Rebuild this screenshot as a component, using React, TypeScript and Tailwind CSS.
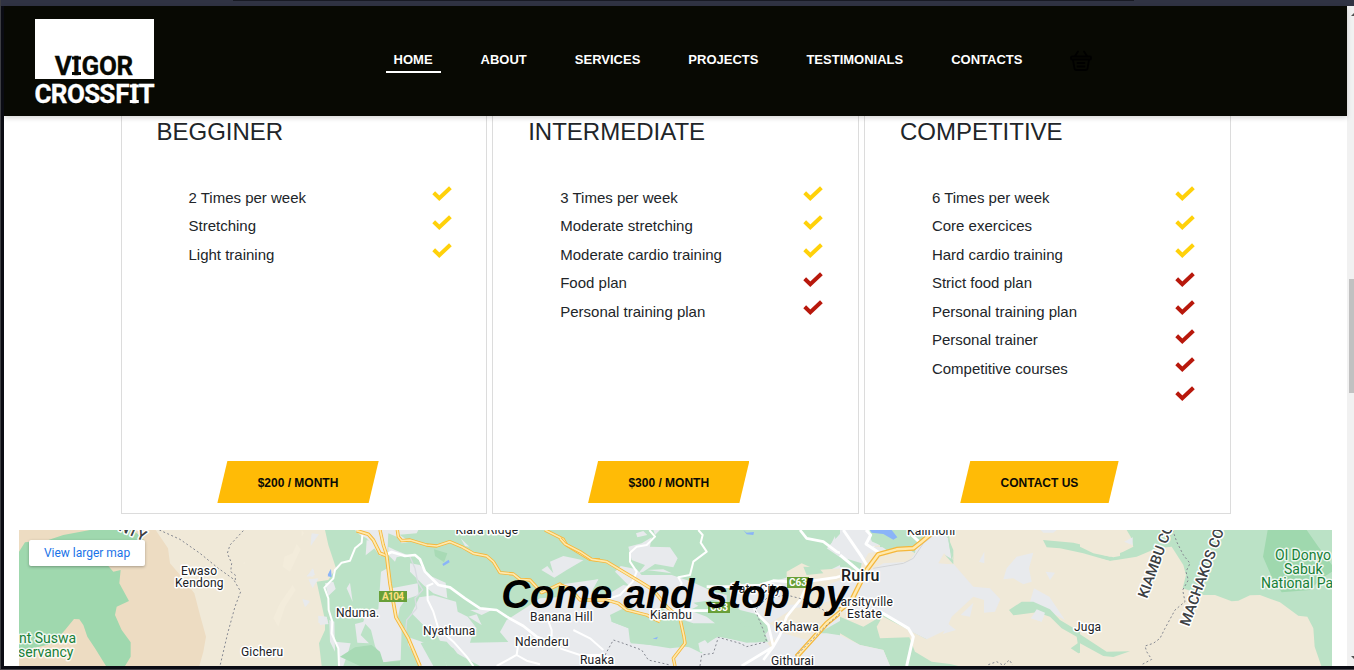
import React from "react";

const YELLOW = "#ffd10a";
const RED = "#b8180c";

const navItems = ["HOME", "ABOUT", "SERVICES", "PROJECTS", "TESTIMONIALS", "CONTACTS"];

const plans = [
  {
    name: "BEGGINER",
    items: ["2 Times per week", "Stretching", "Light training"],
    checks: [YELLOW, YELLOW, YELLOW],
    action: "$200 / MONTH",
    actionRow: "pr-3",
  },
  {
    name: "INTERMEDIATE",
    items: ["3 Times per week", "Moderate stretching", "Moderate cardio training", "Food plan", "Personal training plan"],
    checks: [YELLOW, YELLOW, YELLOW, RED, RED],
    action: "$300 / MONTH",
    actionRow: "pr-3.5",
  },
  {
    name: "COMPETITIVE",
    items: [
      "6 Times per week",
      "Core exercices",
      "Hard cardio training",
      "Strict food plan",
      "Personal training plan",
      "Personal trainer",
      "Competitive courses",
    ],
    checks: [YELLOW, YELLOW, YELLOW, RED, RED, RED, RED, RED],
    action: "CONTACT US",
    actionRow: "pr-4",
  },
];

function Logo() {
  return (
    <svg className="overflow-visible" width="122" height="88" viewBox="34 19 122 88" fontFamily="Roboto, sans-serif" fontWeight="700" fontSize="26">
      <rect x="35" y="19" width="119" height="60" fill="#fff" />
      <g fill="#080903" stroke="#080903" strokeWidth="0.3">
        <text x="54.7 72.6 81.4 98.9 116.4" y="75">VIGOR</text>
        <path stroke="none" d="M72 56.500h9v3h-9zM72 72h9v3h-9z" />
      </g>
      <g fill="#fff" stroke="#fff" strokeWidth="0.3">
        <text x="34.4 50.7 67 84.2 99.2 115.3 130.4 138.6" y="103">CROSSFIT</text>
        <path stroke="none" d="M129.800 84.500h9v3h-9zM129.800 100h9v3h-9z" />
      </g>
    </svg>
  );
}

function Basket() {
  return (
    <svg width="22" height="22" viewBox="0 0 22 22" fill="none" stroke="#000" strokeWidth="1.8" strokeLinecap="round" strokeLinejoin="round">
      <path d="M5 6 8 1.5M17 6l-3-4.500M2 6.500h18a1 1 0 0 1 1 1v1a1 1 0 0 1-1 1H2a1 1 0 0 1-1-1v-1a1 1 0 0 1 1-1zM3 10l1.500 8.500a2 2 0 0 0 2 1.500h9a2 2 0 0 0 2-1.500L19 10M7.500 13h7M7.500 16.500h7" />
    </svg>
  );
}

function Check({ color }: { color: string }) {
  return (
    <svg width="20" height="16" viewBox="0 0 20 16" fill="none" stroke={color} strokeWidth="4" strokeLinejoin="miter">
      <path d="M1.700 7.700 7.300 13.200 18.400 2.800" />
    </svg>
  );
}

const minor = { fill: "none", stroke: "#fff", strokeWidth: 6, strokeLinejoin: "round" as const };
const dashed = { fill: "none", stroke: "#858891", strokeWidth: 3, strokeDasharray: "6 7" };

function Highway({ d, w = 10 }: { d: string; w?: number }) {
  return (
    <g fill="none" strokeLinejoin="round">
      <path d={d} stroke="#f5b73b" strokeWidth={w} />
      <path d={d} stroke="#ffe9ad" strokeWidth={w * 0.5} />
    </g>
  );
}

function WestMap() {
  return (
    <g transform="translate(0 440) scale(0.33333)">
      <path fill="#f0e9d8" d="M57 270H975L985 315 1000 360 1008 385 985 420 950 425 975 540 975 570 957 610 965 678H57z" />
      <path fill="#eddcc2" d="M57 270H467L504 325 510 370 545 410 583 460 600 525 618 590 610 635 598 678H57z" />
      <path fill="#9fd8ae" d="M57 335 75 307 145 300 190 285 270 270H400L432 300 325 378 340 395 362 390 358 430 387 483 350 500 345 525 365 570 392 607V650L375 678H318L285 625 262 590 250 555 238 538 222 537 195 570 160 610 100 625 57 630z" />
      <path fill="#f3ecdb" d="M890 312 902 328 870 395 848 380 853 350 878 340zM878 435 887 450 855 500 835 560 820 535 840 490zM905 270 912 280 905 290zM730 370 734 365 734 372z" />
      <path fill="#e8eaed" d="M935 280 957 283 932 318zM942 388 940 410 920 408zM925 418 955 415 938 445zM907 478 930 485 915 502zM955 527 980 530 985 553 955 548z" />
      <path fill="#8ab4f8" d="M993 387 995 411 983 409z" />
      <path {...dashed} d="M478 270 540 298 600 340 655 385 700 417 722 455 705 500 683 580 660 678M730 272 690 315 682 340 695 370 692 395 706 405V425" />
    </g>
  );
}

function LimuruMap() {
  return (
    <g transform="translate(300 520) scale(0.33333)">
      <g fill="#e8eaed">
        <path d="M165 30H355L350 40 298 44 330 65 305 70 290 50 265 40 262 100 240 108 200 55 180 45z" />
        <path d="M200 60 236 75 197 106zM150 188 158 246 140 205zM75 190 100 185 107 207 85 228z" />
        <path d="M243 155 262 145 275 205 353 190 356 225 318 238 300 262 292 300 305 325 302 420 250 427 225 378 213 330 190 305 200 272 235 268z" />
        <path d="M335 280 358 232 400 226 468 245 473 275 503 290 530 325 515 350 510 368 625 366 600 336 620 300 680 262 720 235 835 228 900 210V438H600L540 438 470 400 440 365 420 362 400 325 370 315z" />
        <path d="M330 130 360 135 385 165 437 188 442 235 400 220 370 195 330 155zM265 80 285 90 322 105 290 112 285 125 265 105zM510 270 580 268 545 285zM505 290 530 283 545 315z" />
        <path d="M724 150 742 138 760 160 750 125 790 108 850 121 800 150 763 173zM770 195 895 178 870 215 820 222z" />
        <path d="M482 55 508 80 495 78z" />
        <path d="M165 312 200 303 182 345 207 370 172 368zM88 300 103 305 105 395 90 365zM55 288 80 292 85 312 60 315zM105 365 152 370 145 395 130 438H115V385zM322 350 420 385 440 438H365L325 375z" />
        <path d="M35 45 55 42 32 72zM38 145 45 165 20 170zM28 182 55 178 38 200zM8 238 28 242 18 258z" />
      </g>
      <path fill="#bbe2c6" d="M390 360 425 385 440 438H400L362 370zM430 370 460 385 480 412 440 400z" />
      <path fill="#a8dab5" d="M120 410 165 382 215 375 240 395 250 427 300 423V438H180zM402 88 442 100 432 127 405 108z" />
      <path fill="#8ab4f8" d="M427 132 446 119 449 127 430 138zM92 147 92 170 83 165z" />
      <path fill="none" stroke="#d9dce1" strokeWidth="4" d="M330 110 345 145 353 185 368 210 345 235 350 265 320 300 316 345" />
      <path {...minor} d="M187 45 185 68 165 85 150 122 125 128 105 150 100 175 73 203 85 235 86 270 97 305 95 340 115 385 117 438" />
      <path {...minor} strokeWidth={8} d="M255 105 275 96 315 108 345 105 360 118 375 155 400 180 415 195 450 202 495 235 540 265 590 270 620 290 670 318 710 350 765 372 800 395 840 405 900 420" />
      <path {...minor} d="M400 190 382 198 383 240 400 275 415 325 460 365 500 410 520 438M590 438 650 405 655 370M650 405 680 422 720 433M790 265 810 295 825 325 900 378M740 290 755 330 755 350" />
      <Highway w={11} d="M170 32 205 43 220 60 240 100 260 107 270 190 288 292 325 355 360 438" />
      <Highway w={10} d="M240 30 250 75 260 105M292 30 295 50 305 62 330 60 380 75 410 78 450 65 485 80 520 100 560 108 580 125 600 158 640 162 660 178 690 180 725 218 780 192 820 220 900 243M735 30 790 58 800 75 870 118 900 120" />
    </g>
  );
}

function KiambuMap() {
  return (
    <g transform="translate(560 520) scale(0.33333)">
      <g fill="#e8eaed">
        <path d="M205 80 245 70 275 52 270 80 330 82 353 115 340 142 285 132 250 155 235 160 255 135 215 120zM228 40 250 33 262 45 232 52zM260 150 310 148 335 160zM280 30H300L285 45z" />
        <path d="M165 155 182 138 230 148 245 165 335 165 395 185 460 215 500 225 500 250 430 250 380 275 330 285 280 240 210 200z" />
        <path d="M0 210 60 190 115 178 90 225 130 232 190 195 240 205 310 260 270 290 200 260 150 285 155 305 208 325 212 370 330 380 345 360 425 400 450 360 475 350 560 365 620 370V438H0z" />
        <path d="M510 190 600 195 690 170 790 160 860 125 800 85 850 30H960V438H440L500 395 600 365 630 325 600 285 540 270 510 240zM825 48 828 82 808 83z" />
      </g>
      <path fill="#f0e9d8" d="M680 155 725 130 770 150 850 145 840 180 790 200 770 250 680 255zM630 310 700 265 770 255 835 235 835 290 760 345 740 360 670 340 600 290zM880 90 960 75V125L930 160 895 130zM870 370 900 365 895 388zM622 370 640 355 650 370 635 385z" />
      <path fill="#bbe2c6" d="M155 285 200 265 275 290 370 310 445 315 510 290 545 320 605 318 625 365 560 368 475 348 420 385 375 380 330 385 210 365 205 325 155 305zM400 248 460 240 500 250 570 300 540 310 460 285zM775 340 845 300 875 270 960 325V360L900 375 870 350 800 340zM910 30H960V75L925 60zM730 140 775 142 790 160 740 165z" />
      <path fill="#bbe2c6" d="M720 30H850L800 85 750 60z" />
      <path fill="#e8eaed" d="M825 48 828 82 808 83zM370 300 400 275 440 290 465 310 400 310zM415 370 435 360 455 385 470 398 420 395z" />
      <path fill="#8ab4f8" d="M550 30 560 38 582 36 580 45 560 43zM278 356 294 350 290 358zM930 30H945L940 38z" />
      <path {...minor} d="M268 30 285 50 260 75 230 80 210 98 210 125 230 155 218 185 180 225 150 235 115 240M415 30 428 45 422 68 440 95 400 125 390 165 355 172 365 190 345 230" />
      <path {...minor} d="M335 272 440 272 470 260M440 200 520 200 600 195 640 182 720 188 830 172 890 155M720 30 740 55 790 65 830 95 870 110 920 150M850 30 900 100 925 140M925 30 918 75 945 85M570 240 590 280 625 315 640 380 545 438M740 200 720 240 680 290 660 345 640 380 610 420" strokeWidth={8} />
      <path {...minor} d="M40 330 90 355 130 390M0 385 60 405 130 405" />
      <path {...dashed} d="M135 405 160 360 190 370 245 390 265 420 330 435M420 438 425 405 460 400 475 352 540 370 560 380 620 365 610 330 585 270 620 235 680 225 730 238 790 270 825 285" />
      <Highway d="M0 55 15 72 60 95 95 118 140 125 190 155 240 185 280 210 320 260 360 295 372 350 375 370 340 415 345 438M0 195 30 205 60 240 140 240 175 250 200 270 260 285 300 305" />
      <Highway w={15} d="M960 105 920 150 895 210 880 245 800 310 710 410" />
      <path {...dashed} d="M840 280 790 325 705 410" />
    </g>
  );
}

function RuiruMap() {
  return (
    <g transform="translate(840 520) scale(0.33333)">
      <path fill="#f0e9d8" d="M325 30H840V438H0V260L120 285 260 358 240 300 340 230 339 130z" />
      <g fill="#e8eaed">
        <path d="M0 30H85L100 80 215 85 300 35 325 55 335 125 400 200 450 205 481 238 465 275 432 278V240L400 230 335 290 318 330 260 358 215 335 150 295 110 270 60 275 0 275z" />
        <path d="M400 248 390 290 362 285zM325 312 348 330 308 342zM433 95V130L417 125zM580 98 567 145 575 185 550 193 520 175 490 178 500 145 530 110zM617 155 645 158 630 180zM582 205 628 230 675 300 620 270 570 245zM595 270 615 280 605 305 573 295zM602 30H650L640 38 610 38z" />
      </g>
      <path fill="#f0e9d8" d="M85 100 120 92 190 85 225 100 205 125 130 130 95 150 60 145zM312 100 295 130 320 132 340 133z" />
      <path fill="#bbe2c6" d="M100 30H205L230 60 225 100 200 85 140 90 105 65zM0 110 65 130 60 155 0 140zM315 105 340 120V133zM323 50 340 90V120L330 90zM0 290 70 320 130 285 110 320 120 355 208 352 225 395 275 425 330 432 355 438H150L130 390 60 375 0 340z" />
      <path fill="#bbe2c6" d="M609 60 700 68 750 80 790 105 820 112 840 108V121L810 123 730 100 660 85 620 82zM507 270 545 245 580 245 630 268 660 300 760 360 800 398 840 393V405L800 410 750 390 715 400 692 385 713 370 710 350 665 325 630 290 590 277 520 286z" />
      <path fill="#e8eaed" d="M0 345 60 375 130 390 150 438H0zM573 295 590 268 615 278 605 305z" />
      <path fill="#8ab4f8" d="M90 30H155L172 52 160 59 130 42 95 38z" />
      <path fill="none" stroke="#d3d5d7" strokeWidth="3" d="M100 145 190 130 220 115 250 70 300 30" />
      <path {...minor} strokeWidth={9} d="M0 105 60 155M10 30 65 110 80 135M78 30 92 45 78 72 120 100M215 45 240 68" />
      <path {...minor} strokeWidth={9} d="M120 275 205 325 220 350 200 438" />
      <Highway w={15} d="M0 270 35 240 60 190 80 150 115 103 170 88 220 85 245 65 275 40" />
      <path {...dashed} d="M445 434 470 425 490 436 508 420 518 435" />
    </g>
  );
}

function EastMap() {
  return (
    <g transform="translate(1080 500) scale(0.33333)">
      <path fill="#f0e9d8" d="M0 90H140L152 110 160 140 130 155 90 170 40 160 0 140z" />
      <path fill="#f0e9d8" d="M0 162 90 183 170 170 230 145 275 140 310 195 318 225 308 265 370 285 405 285 455 304 475 302 510 286 540 285 600 307 655 347 682 350 700 385 704 440 724 498H0z" />
      <path fill="#9fd8ae" d="M563 90H680L715 140 756 195V215L725 235 690 270 605 277 575 230 549 170z" />
      <path fill="#e8eaed" d="M158 112V136L132 125z" />
      <path fill="#bbe2c6" d="M0 403 80 455 150 454 100 471 70 468 0 430z" />
      <path {...dashed} d="M278 90 290 125 310 165 330 190 318 215 325 240 308 270 315 305 285 330 255 385 240 415 220 430 195 438 200 455 215 478 185 494" />
    </g>
  );
}

const labels: [string, number, number, number?][] = [
  ["Kiara Ridge", 455.5, 534],
  ["Ewaso", 181, 575],
  ["Kendong", 175, 587],
  ["Nduma.", 336, 617],
  ["Nyathuna", 423, 635],
  ["Gicheru", 241, 656],
  ["Ndenderu", 515, 646],
  ["Banana Hill", 530, 621],
  ["Ruaka", 580, 664],
  ["Kiambu", 650, 619],
  ["Tatu City", 732, 593],
  ["Kahawa", 775, 631],
  ["Githurai", 771, 665],
  ["Varsityville", 833, 606],
  ["Estate", 847, 618],
  ["Kalimoni", 907, 535],
  ["Juga", 1074, 631],
  ["Ruiru", 841, 581, 16],
];

function MapView() {
  return (
    <svg className="block" width="1313" height="136" viewBox="19 530 1313 136" fontFamily="Roboto, sans-serif">
      <rect x="19" y="530" width="1313" height="136" fill="#bbe2c6" />
      <WestMap />
      <LimuruMap />
      <KiambuMap />
      <RuiruMap />
      <EastMap />
      <g stroke="#fff" strokeWidth="3" strokeLinejoin="round" paintOrder="stroke" fill="#202124">
        {labels.map(([t, x, y, size]) => (
          <text key={t} x={x} y={y} fontSize={size ?? 12} fontWeight={size ? 500 : 400} letterSpacing="0.2">
            {t}
          </text>
        ))}
        <g fill="#188038" fontSize="14" strokeOpacity="0.8">
          <text x="19" y="643">nt Suswa</text>
          <text x="18" y="657">servancy</text>
          <text x="1275" y="560">Ol Donyo</text>
          <text x="1284" y="574">Sabuk</text>
          <text x="1261" y="588">National Park</text>
        </g>
        <g fill="#3c4043" fontSize="14.500" fontWeight="500">
          <text transform="translate(1147 599) rotate(-70)">KIAMBU COUNTY</text>
          <text transform="translate(1189 627) rotate(-70)">MACHAKOS COUNTY</text>
          <text transform="translate(118 530) rotate(24)">NTY</text>
        </g>
      </g>
      <g fontSize="10" fontWeight="700" textAnchor="middle">
        <rect x="379" y="591" width="28" height="11" fill="#689f38" />
        <text x="393" y="600" fill="#ffe082" textLength="22">A104</text>
        <rect x="787" y="577" width="22" height="11" fill="#689f38" />
        <text x="798" y="586" fill="#fff">C63</text>
        <rect x="708" y="602" width="22" height="11" fill="#689f38" />
        <text x="719" y="611" fill="#fff">C63</text>
      </g>
    </svg>
  );
}

export default function App() {
  return (
    <div className="flex h-[670px] w-[1354px] flex-col overflow-hidden bg-[#0b0c14] font-['Liberation_Sans',Arial,sans-serif]">
      <div className="flex h-1.5 shrink-0 justify-center border-l border-[#3d3e43] bg-[#303343]">
        <div className="ml-3 h-px w-[901px] bg-[#181a24]" />
      </div>
      <div className="flex h-[660px] shrink-0 border-l border-[#3d3e43] pl-[3px]">
        <div className="flex w-[1343px] flex-col bg-white">
          <header className="z-10 flex h-[110px] shrink-0 bg-[#080903] shadow-[0_2px_5px_rgba(0,0,0,0.16)]">
            <div className="w-[381.600px] pt-[13px] pl-[30px]">
              <Logo />
            </div>
            <nav className="flex h-[68px] gap-8 pt-[42px] text-[13px] font-bold text-white">
              {navItems.map((item, i) => (
                <a key={item} className={`h-[25px] px-2 leading-[23px] ${i === 0 ? "border-b-2 border-white" : ""}`}>
                  {item}
                </a>
              ))}
            </nav>
            <div className="pt-11 pl-10">
              <Basket />
            </div>
          </header>
          <main className="flex flex-col">
            <section className="ml-[116.600px] grid h-[398px] w-[1110px] grid-cols-3 gap-[5.200px]">
              {plans.map((plan) => (
                <article key={plan.name} className="flex flex-col border border-t-0 border-[#dcdcdc] pr-[34.600px] pl-[34.900px] text-[#212529]">
                  <h2 className="h-[67.500px] text-2xl">{plan.name}</h2>
                  <div className="flex h-[277.500px] justify-between pl-8">
                    <ul className="text-[15px] leading-[28.500px]">
                      {plan.items.map((item) => (
                        <li key={item}>{item}</li>
                      ))}
                    </ul>
                    <ul className="pt-[1.900px]">
                      {plan.checks.map((color, i) => (
                        <li key={i} className="h-[28.500px]">
                          <Check color={color} />
                        </li>
                      ))}
                    </ul>
                  </div>
                  <div className={`flex justify-center ${plan.actionRow}`}>
                    <button className="h-[42px] bg-[#ffbb06] px-[40.300px] pt-0.5 text-xs font-bold text-[#0a0a05] [clip-path:polygon(10px_0,100%_0,calc(100%_-_10px)_100%,0_100%)]">
                      {plan.action}
                    </button>
                  </div>
                </article>
              ))}
            </section>
            <section className="relative mt-4 ml-[15px] h-[136px] w-[1313px] overflow-hidden">
              <MapView />
              <a className="absolute top-2.5 left-2.5 flex h-[26px] w-[116px] items-center justify-center rounded-[2px] bg-white font-[Roboto,sans-serif] text-xs text-[#1a73e8] shadow-[0_1px_3px_rgba(0,0,0,0.3)]">
                View larger map
              </a>
              <h2 className="absolute inset-x-0 top-[41px] pr-0.5 text-center text-[40px] leading-[46px] font-bold text-black italic">Come and stop by</h2>
            </section>
          </main>
        </div>
        <div className="flex w-[7px] flex-col items-end bg-[#f1f1f1]">
          <svg className="mt-[7px] shrink-0" width="3" height="3" viewBox="0 0 3 3">
            <path d="M0 3 3 0V3z" fill="#505050" />
          </svg>
          <div className="mt-[263px] h-[114px] w-[5px] shrink-0 bg-[#c1c1c1]" />
          <svg className="mt-[263px] shrink-0" width="3" height="3" viewBox="0 0 3 3">
            <path d="M0 0H3V3z" fill="#505050" />
          </svg>
        </div>
      </div>
      <div className="h-1 shrink-0 border-b border-l border-[#45434a] bg-[#0b0c14]" />
    </div>
  );
}
